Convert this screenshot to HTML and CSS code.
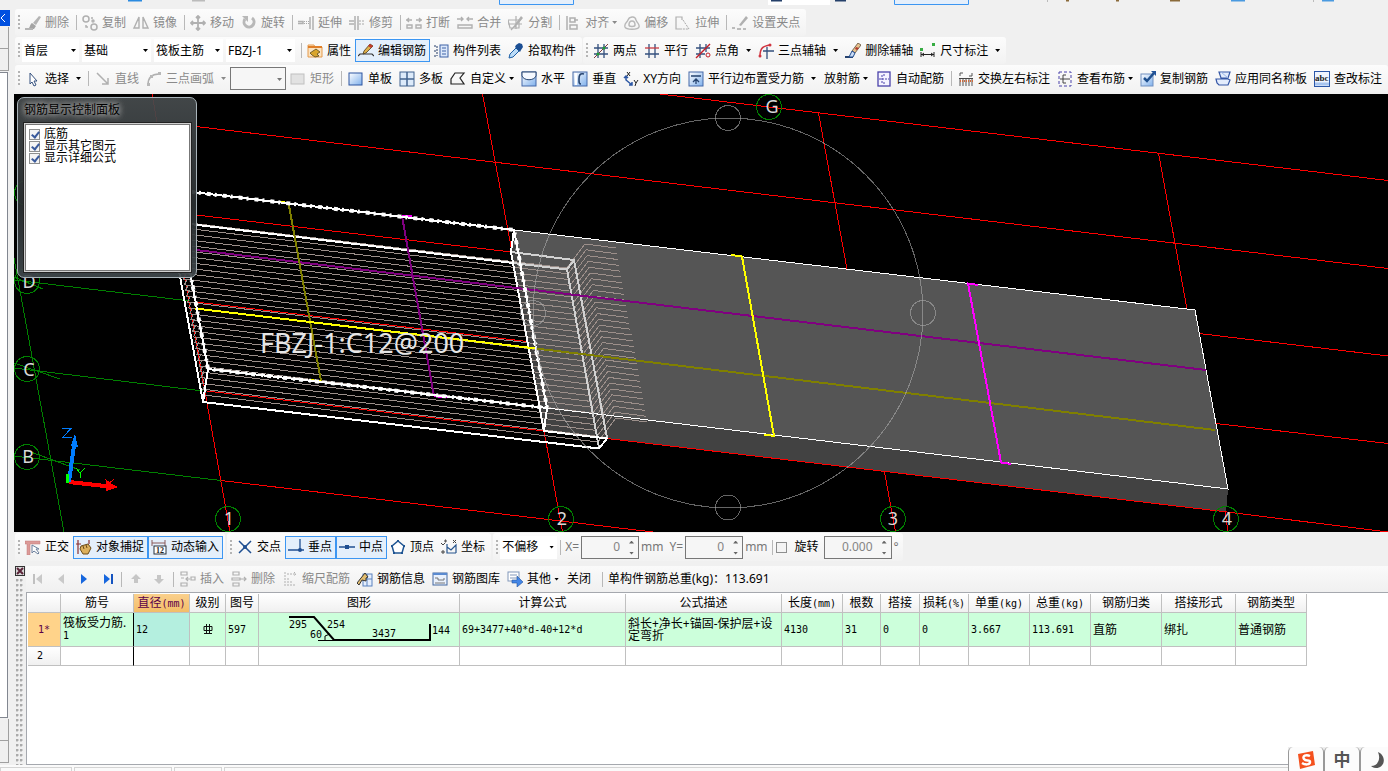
FILE: index.html
```html
<!DOCTYPE html>
<html lang="zh-CN">
<head>
<meta charset="utf-8">
<title>钢筋编辑</title>
<link rel="stylesheet" href="styles.css">
</head>
<body>
<svg class="defs" aria-hidden="true">
  <defs>
    <linearGradient id="blueFill" x1="0" y1="0" x2="1" y2="1"><stop offset="0" stop-color="#fff"/><stop offset="1" stop-color="#7fb0ec"/></linearGradient>
    <symbol id="brush" viewBox="0 0 16 16"><path d="M14 1l2 1-5 8-3-2z" fill="#b4b4b4"/><path d="M7 8l4 3-2 3H3c2-1 2-5 4-6z" fill="#a4a4a4"/><path d="M0 14h8" stroke="#b4b4b4" stroke-width="2"/></symbol>
    <symbol id="copy" viewBox="0 0 16 16"><g fill="none" stroke="#b0b0b0" stroke-width="1.5"><circle cx="4" cy="4" r="3"/><circle cx="12" cy="12" r="3"/><path d="M9 3h2M4 10v2h2"/><circle cx="11" cy="6" r="1"/></g></symbol>
    <symbol id="mirror" viewBox="0 0 16 16"><path d="M6 2v11H1zM10 2v11h5z" fill="none" stroke="#b0b0b0" stroke-width="1.4"/></symbol>
    <symbol id="move" viewBox="0 0 16 16"><path d="M8 1v14M1 8h14M6 3l2-2 2 2M6 13l2 2 2-2M3 6L1 8l2 2M13 6l2 2-2 2" fill="none" stroke="#b0b0b0" stroke-width="1.8"/></symbol>
    <symbol id="rotate" viewBox="0 0 16 16"><path d="M4 4a5 5 0 1 0 7-1" fill="none" stroke="#b8b8b8" stroke-width="3"/><path d="M1 1h6v6z" fill="#b8b8b8"/></symbol>
    <symbol id="extend" viewBox="0 0 16 16"><path d="M0 6.500h5v2H0M12 2v12M15 1v14" fill="none" stroke="#b0b0b0" stroke-width="1.5"/><path d="M6 6.500h5M6 8.500h5" stroke="#a8a8a8" stroke-dasharray="1 1"/></symbol>
    <symbol id="trim" viewBox="0 0 16 16"><path d="M0 6h5M0 9h5M6 1v14M9 1v14" fill="none" stroke="#b0b0b0" stroke-width="1.5"/><path d="M10 6h6M10 9h6" stroke="#a8a8a8" stroke-dasharray="2 1"/></symbol>
    <symbol id="break" viewBox="0 0 16 16"><path d="M0 5h6M10 5h6M3 3L1 5l2 2M13 3l2 2-2 2M1 10h5v3H1zM10 10h5v3h-5z" fill="none" stroke="#b0b0b0" stroke-width="1.4"/></symbol>
    <symbol id="merge" viewBox="0 0 16 16"><path d="M0 4h6M10 4h6M4 2l2 2-2 2M12 2l-2 2 2 2M1 10h14v3H1z" fill="none" stroke="#b0b0b0" stroke-width="1.4"/></symbol>
    <symbol id="split" viewBox="0 0 16 16"><path d="M0 5h11v8H2zM3 15L13 4M8 1v13M0 9h14" fill="none" stroke="#b0b0b0" stroke-width="1.2"/><path d="M13 1l2 2-6 7-2 1 1-3z" fill="#b0b0b0"/></symbol>
    <symbol id="align" viewBox="0 0 16 16"><path d="M2 1v14M5 3h5v4H5zM5 10h7v4H5zM9 5h4" fill="none" stroke="#b0b0b0" stroke-width="1.5"/></symbol>
    <symbol id="offset" viewBox="0 0 16 16"><path d="M1 12c-1-4 2-4 3-7s7-5 8 0c1 3 4 4 3 7s-13 3-14 0z" fill="none" stroke="#b8b8b8" stroke-width="1.4"/><path d="M5 10c0-2 1-4 3-4s3 2 3 4-6 2-6 0z" fill="none" stroke="#b8b8b8" stroke-width="1.5"/></symbol>
    <symbol id="stretch" viewBox="0 0 16 16"><path d="M7 14H1V2h6v3" fill="none" stroke="#b0b0b0" stroke-width="1.2"/><path d="M8 5l6 9H7" fill="none" stroke="#a8a8a8" stroke-dasharray="2 1"/></symbol>
    <symbol id="grippt" viewBox="0 0 16 16"><path d="M14 1l2 2-7 8-2-1z" fill="#b0b0b0"/><path d="M0 13h3M5 14h4M11 14h3" stroke="#a8a8a8" stroke-width="1.500"/></symbol>
    <symbol id="props" viewBox="0 0 16 16"><path d="M1 2h6l1 2h7v10H1z" fill="#fbe3c0" stroke="#e59a4c"/><path d="M1 4h14" stroke="#e07f28" stroke-width="2"/><path d="M3 10l6-4 4 3-3 2 2 2-4 1-3-2z" fill="#d9a52c" stroke="#5b4a1c" stroke-width=".8"/></symbol>
    <symbol id="editbar" viewBox="0 0 16 16"><path d="M0 13l2-2h12l2 2" fill="none" stroke="#333" stroke-width="1.2"/><path d="M12 1l3 2-7 7-3 1 1-3z" fill="#e0b04a" stroke="#4a3b20" stroke-width=".8"/><path d="M12 1l3 2-2 2-3-2z" fill="#c23a2c"/></symbol>
    <symbol id="list" viewBox="0 0 16 16"><path d="M1 3h3M1 8h3M1 13h3M4 3v10" fill="none" stroke="#223a66" stroke-dasharray="2 1"/><rect x="7" y="2" width="8" height="12" fill="#dce8fa" stroke="#3f62a6"/><path d="M9 5h4M9 8h4M9 11h4" stroke="#3f62a6"/></symbol>
    <symbol id="dropper" viewBox="0 0 16 16"><path d="M1 15l1-4 6-6 3 3-6 6z" fill="#bcdcf8" stroke="#1d5fa6"/><path d="M7 4l5 5 1-2 2-3-1-3-3-1-3 2z" fill="#1c4f94"/></symbol>
    <symbol id="twopt" viewBox="0 0 16 16"><path d="M1 5h14M1 11h14M5 1v14M11 1v14" stroke="#34507e" stroke-width="1.3"/><path d="M1 15L15 1" stroke="#803838"/><circle cx="5" cy="11" r="1.500" fill="#1f9a33"/><circle cx="11" cy="5" r="1.500" fill="#1f9a33"/></symbol>
    <symbol id="parallel" viewBox="0 0 16 16"><path d="M5 1v14M11 1v14M1 11h14" stroke="#34507e" stroke-width="1.3"/><path d="M1 5h14" stroke="#c83a42" stroke-width="1.3"/></symbol>
    <symbol id="ptangle" viewBox="0 0 16 16"><path d="M1 5h14M1 11h9M5 1v14M11 1v8" stroke="#34507e" stroke-width="1.300"/><path d="M1 15L15 1" stroke="#c31e28" stroke-width="1.500"/><circle cx="13" cy="12" r="2" fill="none" stroke="#c31e28"/></symbol>
    <symbol id="arcaxis" viewBox="0 0 16 16"><path d="M2 13c0-8 3-10 10-11" fill="none" stroke="#d03540" stroke-width="1.500"/><path d="M5 8h11M9 4v12" stroke="#34507e" stroke-width="1.300"/><circle cx="2" cy="13" r="1.500" fill="#d03540"/><circle cx="12" cy="2" r="1.500" fill="#d03540"/></symbol>
    <symbol id="delaxis" viewBox="0 0 16 16"><path d="M0 14h8" stroke="#27436f" stroke-width="2"/><path d="M13 0l3 2-6 8-3-2z" fill="#e8c28e" stroke="#5a4b36" stroke-width=".8"/><path d="M7 8l3 2-2 4H4z" fill="#c9dcf6" stroke="#1f4a8c"/><path d="M11 4l3 1-2 2-2-1z" fill="#b23b2d"/></symbol>
    <symbol id="dimension" viewBox="0 0 16 16"><path d="M1 9v5M14 9v5M1 11.500h13M4 10l-2 1.500L4 13M11 10l2 1.500L11 13" fill="none" stroke="#222"/><path d="M0 5h3v3H0zM12 0h3v3h-3z" fill="#37ad43"/></symbol>
    <symbol id="cursor" viewBox="0 0 16 16"><path d="M5 2v11l2-2 2 4 2-1-2-4h3z" fill="#fff" stroke="#34507e"/></symbol>
    <symbol id="line" viewBox="0 0 16 16"><path d="M2 2l11 11M13 7v6H7" fill="none" stroke="#b0b0b0" stroke-width="1.500"/></symbol>
    <symbol id="arc" viewBox="0 0 16 16"><path d="M2 14C2 6 6 3 13 3" fill="none" stroke="#b0b0b0" stroke-width="1.500"/><path d="M1 12h3v3H1zM4 4h3v3H4zM12 1h3v3h-3z" fill="#b8b8b8"/></symbol>
    <symbol id="rect" viewBox="0 0 16 16"><rect x="1" y="3" width="13" height="10" fill="#e2e2e2" stroke="#c0c0c0"/></symbol>
    <symbol id="single" viewBox="0 0 16 16"><rect x="1" y="2" width="13" height="12" fill="url(#blueFill)" stroke="#2c55a0"/></symbol>
    <symbol id="multi" viewBox="0 0 16 16"><rect x="1" y="1" width="14" height="14" fill="#dceafa" stroke="#41638f"/><path d="M8 1v14M1 8h14" stroke="#41638f" stroke-width="1.500"/></symbol>
    <symbol id="custom" viewBox="0 0 16 16"><path d="M5 2h9l-4 5 4 6H1V8z" fill="none" stroke="#222" stroke-width="1.200"/></symbol>
    <symbol id="horiz" viewBox="0 0 16 16"><rect x="1" y="1" width="14" height="14" fill="url(#blueFill)" stroke="#4569a8"/><path d="M1 5c2 5 12 5 14 0V1H1z" fill="#f4f8ff" stroke="#25436f"/></symbol>
    <symbol id="vert" viewBox="0 0 16 16"><rect x="1" y="1" width="14" height="14" fill="url(#blueFill)" stroke="#4569a8"/><path d="M12 3C8 2 7 4 7 8s0 5 2 5" fill="none" stroke="#25436f" stroke-width="1.600"/><path d="M4 2v12" stroke="#fff" stroke-width="2"/></symbol>
    <symbol id="xydir" viewBox="0 0 16 16"><path d="M4 1l3 4M7 1L4 5M11 9l2 3 2-3M13 12l-1 3" stroke="#222" fill="none"/><path d="M3 5v4l6 5M1 7l2-2 2 2M9 11v3H6" fill="none" stroke="#2c57a4" stroke-width="1.500"/></symbol>
    <symbol id="edgebar" viewBox="0 0 16 16"><rect x="1" y="1" width="14" height="14" fill="url(#blueFill)" stroke="#4569a8"/><path d="M3 5h10M8 13V8M5 11l3-3 3 3" fill="none" stroke="#25436f" stroke-width="1.300"/></symbol>
    <symbol id="auto" viewBox="0 0 16 16"><rect x="2" y="1" width="12" height="14" fill="#f5f3ff" stroke="#4a42aa" stroke-width="1.300"/><path d="M9 4H6v8h3M3 8h10" fill="none" stroke="#4a42aa" stroke-dasharray="2 1"/></symbol>
    <symbol id="swap" viewBox="0 0 16 16"><path d="M2 5V2h3M14 2v3h-3" fill="none" stroke="#555"/><path d="M1 7.500h14" stroke="#444"/><path d="M2 8v7M5 8v7M8 8v7M11 8v7M14 8v7" stroke="#555"/><path d="M2 10h13" stroke="#d36a3a" stroke-width="2" stroke-dasharray="1 1"/></symbol>
    <symbol id="viewbar" viewBox="0 0 16 16"><rect x="2" y="1" width="12" height="14" fill="none" stroke="#4a42aa" stroke-dasharray="3 2"/><path d="M9 4H6v8h3M3 8h10" fill="none" stroke="#444"/></symbol>
    <symbol id="copybar" viewBox="0 0 16 16"><rect x="1" y="3" width="12" height="12" fill="url(#blueFill)" stroke="#7090c0"/><path d="M4 7l3 3 7-8" fill="none" stroke="#1e4f8e" stroke-width="2.500"/><path d="M11 0h5v5z" fill="#23549a"/></symbol>
    <symbol id="apply" viewBox="0 0 16 16"><path d="M4 1h11l-2 6H6zM1 8h12l2 1-2 5H4l-2-2z" fill="#e3ecfc" stroke="#3557a6" stroke-width="1.200"/><path d="M6 1l7 6" stroke="#9bb7e8"/></symbol>
    <symbol id="abc" viewBox="0 0 16 16"><rect x="0.500" y="0.500" width="15" height="15" fill="#eef4fe" stroke="#2a56a8"/><path d="M1 13h14" stroke="#a6c4ef" stroke-width="3"/><text x="1" y="10" font-family="Liberation Serif" font-size="9" font-weight="bold" fill="#222">abc</text></symbol>
    <symbol id="ortho" viewBox="0 0 16 16"><path d="M0 2h15v3H5v11H2V5H0z" fill="#dc9a98" stroke="#c27b79" stroke-width=".5"/><path d="M7 6v8l2-2 4 3 1-1-3-4h3z" fill="#fff" stroke="#6a7f9c"/></symbol>
    <symbol id="snap" viewBox="0 0 16 16"><path d="M2 1v14M13 1v4M0 5h5" stroke="#8a3030" stroke-width="1.200"/><path d="M5 7l7-2 3 4-3 6H7l-3-5z" fill="#dcb05c" stroke="#6b4c1a"/><path d="M7 7l1 3M10 6l1 3" stroke="#6b4c1a"/></symbol>
    <symbol id="dyn" viewBox="0 0 16 16"><path d="M1 1v6M14 1v6M1 4h13" stroke="#8a5a5a"/><rect x="3" y="7" width="12" height="8" fill="#fff" stroke="#27303c"/><text x="5" y="14" font-family="Liberation Serif" font-size="8" font-weight="bold" fill="#222">12</text></symbol>
    <symbol id="cross" viewBox="0 0 16 16"><path d="M2 2l12 12M14 2L2 14" stroke="#1f4f92" stroke-width="1.500"/><circle cx="8" cy="8" r="2" fill="#1f4f92"/></symbol>
    <symbol id="perp" viewBox="0 0 16 16"><path d="M0 11h16M12 0v11" stroke="#1f4f92" stroke-width="1.300"/><circle cx="12" cy="11" r="2" fill="#1f4f92"/></symbol>
    <symbol id="mid" viewBox="0 0 16 16"><path d="M0 8h16" stroke="#1f4f92" stroke-width="1.500"/><rect x="6" y="6" width="4" height="4" fill="#1f4f92"/></symbol>
    <symbol id="vertex" viewBox="0 0 16 16"><path d="M8 2l6 5-2 7H4L2 7z" fill="#fff" stroke="#1f5593" stroke-width="1.500"/><path d="M7 1h2v2H7zM1 6h2v2H1zM13 6h2v2h-2zM3 13h2v2H3zM11 13h2v2h-2z" fill="#1f5593"/></symbol>
    <symbol id="coord" viewBox="0 0 16 16"><path d="M0 4l2 2 2-2M1 12h2v2H1zM12 1l3 3M15 1l-3 3M4 1h1v2H4z" fill="none" stroke="#444"/><path d="M6 5v9h9M6 8l4 3 5-5v8" fill="none" stroke="#27558e" stroke-width="1.200"/></symbol>
    <symbol id="first" viewBox="0 0 16 16"><path d="M4 3v10" stroke="#c0c0c0" stroke-width="2"/><path d="M12 3v10L6 8z" fill="#c9c9c9"/></symbol>
    <symbol id="prev" viewBox="0 0 16 16"><path d="M11 3v10L5 8z" fill="#c9c9c9"/></symbol>
    <symbol id="next" viewBox="0 0 16 16"><path d="M5 3v10l6-5z" fill="#1767de"/></symbol>
    <symbol id="last" viewBox="0 0 16 16"><path d="M5 3v10l6-5z" fill="#1767de"/><path d="M13 3v10" stroke="#1554c0" stroke-width="2"/></symbol>
    <symbol id="up" viewBox="0 0 16 16"><path d="M8 3l5 5h-3v4H6V8H3z" fill="#c6c6c6"/></symbol>
    <symbol id="down" viewBox="0 0 16 16"><path d="M8 13l5-5h-3V4H6v4H3z" fill="#c6c6c6"/></symbol>
    <symbol id="insert" viewBox="0 0 16 16"><path d="M1 1h6v3H1zM1 12h6v3H1zM1 7h3M6 8h4M8 6L6 8l2 2M11 6h4v3h-4z" fill="none" stroke="#b0b0b0" stroke-width="1.200"/></symbol>
    <symbol id="remove" viewBox="0 0 16 16"><path d="M2 1h6v3H2zM2 12h6v3H2zM1 7h8v2H1zM9 8h6M13 6l2 2-2 2" fill="none" stroke="#b0b0b0" stroke-width="1.200"/></symbol>
    <symbol id="scale" viewBox="0 0 16 16"><path d="M3 1v14M5 3h8M12 1l2 2-2 2M6 15V7M9 15v-5M12 15v-3" fill="none" stroke="#b0b0b0" stroke-dasharray="2 1"/></symbol>
    <symbol id="info" viewBox="0 0 16 16"><rect x="6" y="3" width="9" height="12" fill="#e6effd" stroke="#5b82bf"/><path d="M6 8h9M10 3v12" stroke="#5b82bf"/><path d="M0 12l8-10 3 4-2 1v3L5 9l-3 5z" fill="#e2bd70" stroke="#333"/></symbol>
    <symbol id="gallery" viewBox="0 0 16 16"><rect x="1" y="2" width="14" height="12" fill="#e9f1fd" stroke="#44699f"/><path d="M1 3h14" stroke="#5a8ad0" stroke-width="2"/><path d="M3 7h3v2h6V7M3 12h10" fill="none" stroke="#777"/></symbol>
    <symbol id="other" viewBox="0 0 16 16"><rect x="1" y="1" width="11" height="9" fill="#fff" stroke="#8197ba"/><path d="M3 4h7M3 7h7" stroke="#8197ba"/><path d="M5 9h5V5l6 6-6 5v-4H5z" fill="#4486e6" stroke="#24549e" stroke-width=".6"/></symbol>
  </defs>
</svg>

<svg class="top-strip" viewBox="0 0 1388 9" preserveAspectRatio="xMinYMin slice" aria-hidden="true">
  <path d="M128 0h14" stroke="#2a8ae0" stroke-width="3"/><path d="M192 0h13" stroke="#bbb" stroke-width="3"/>
  <path d="M499.500-2v6.500h74V-2" fill="#e5effb" stroke="#3c96f2"/><path d="M768-1h62v6h-62z" fill="#fff"/><path d="M771 0h11M835 0h11" stroke="#25406a" stroke-width="3"/>
  <path d="M894.500-2v6.500h74V-2" fill="#e5effb" stroke="#3c96f2"/><path d="M1047.500 0v2M1313.500 0v2" stroke="#bbb"/><path d="M1066 0h3M1116 0h3M1170 0h10" stroke="#8a6a3a" stroke-width="3"/><path d="M1231 0h14M1322 0h12" stroke="#4a9ae0" stroke-width="3"/>
</svg>

<div class="app">
  <aside class="dock">
    <button class="dock-collapse" aria-label="收起"><svg viewBox="0 0 10 16" width="10" height="16"><path d="M5 4L1 8l4 4" fill="none" stroke="#fff"/></svg></button>
    <div class="dock-tab"></div><div class="dock-tab"></div>
    <div class="dock-body"></div>
    <div class="dock-tab"></div><div class="dock-tab"></div>
  </aside>

  <main class="work">
    <div class="bars">
      <div class="bar-row">
        <div class="bar">
          <i class="grip"></i>
          <button class="tool" disabled><svg class="ico"><use href="#brush"/></svg>删除</button><i class="sep"></i>
          <button class="tool" disabled><svg class="ico"><use href="#copy"/></svg>复制</button>
          <button class="tool" disabled><svg class="ico"><use href="#mirror"/></svg>镜像</button><i class="sep"></i>
          <button class="tool" disabled><svg class="ico"><use href="#move"/></svg>移动</button>
          <button class="tool" disabled><svg class="ico"><use href="#rotate"/></svg>旋转</button><i class="sep"></i>
          <button class="tool" disabled><svg class="ico"><use href="#extend"/></svg>延伸</button>
          <button class="tool" disabled><svg class="ico"><use href="#trim"/></svg>修剪</button><i class="sep"></i>
          <button class="tool" disabled><svg class="ico"><use href="#break"/></svg>打断</button>
          <button class="tool" disabled><svg class="ico"><use href="#merge"/></svg>合并</button>
          <button class="tool" disabled><svg class="ico"><use href="#split"/></svg>分割</button><i class="sep"></i>
          <button class="tool" disabled><svg class="ico"><use href="#align"/></svg>对齐<i class="caret near"></i></button>
          <button class="tool" disabled><svg class="ico"><use href="#offset"/></svg>偏移</button>
          <button class="tool" disabled><svg class="ico"><use href="#stretch"/></svg>拉伸</button><i class="sep"></i>
          <button class="tool" disabled><svg class="ico"><use href="#grippt"/></svg>设置夹点</button>
        </div>
      </div>
      <div class="bar-row">
        <div class="bar">
          <i class="grip"></i>
          <div class="pickers">
            <span class="pick short"><select aria-label="楼层"><option>首层</option></select></span>
            <span class="pick"><select aria-label="构件类型"><option>基础</option></select></span>
            <span class="pick"><select aria-label="构件"><option>筏板主筋</option></select></span>
            <span class="pick"><select aria-label="名称"><option>FBZJ-1</option></select></span>
          </div>
          <i class="sep"></i>
          <button class="tool"><svg class="ico"><use href="#props"/></svg>属性</button>
          <button class="tool on"><svg class="ico"><use href="#editbar"/></svg>编辑钢筋</button>
          <button class="tool"><svg class="ico"><use href="#list"/></svg>构件列表</button>
          <button class="tool"><svg class="ico"><use href="#dropper"/></svg>拾取构件</button>
        </div>
        <div class="bar">
          <i class="grip"></i>
          <button class="tool"><svg class="ico"><use href="#twopt"/></svg>两点</button>
          <button class="tool"><svg class="ico"><use href="#parallel"/></svg>平行</button>
          <button class="tool"><svg class="ico"><use href="#ptangle"/></svg>点角<i class="caret"></i></button>
          <button class="tool"><svg class="ico"><use href="#arcaxis"/></svg>三点辅轴<i class="caret"></i></button>
          <button class="tool"><svg class="ico"><use href="#delaxis"/></svg>删除辅轴</button>
          <button class="tool"><svg class="ico"><use href="#dimension"/></svg>尺寸标注<i class="caret"></i></button>
        </div>
      </div>
      <div class="bar-row">
        <div class="bar wide">
          <i class="grip"></i>
          <button class="tool"><svg class="ico"><use href="#cursor"/></svg>选择<i class="caret"></i></button><i class="sep even"></i>
          <button class="tool" disabled><svg class="ico"><use href="#line"/></svg>直线</button>
          <button class="tool" disabled><svg class="ico"><use href="#arc"/></svg>三点画弧<i class="caret"></i></button>
          <span class="pick boxed"><select aria-label="画法" disabled><option></option></select></span>
          <button class="tool" disabled><svg class="ico"><use href="#rect"/></svg>矩形</button><i class="sep even"></i>
          <button class="tool"><svg class="ico"><use href="#single"/></svg>单板</button>
          <button class="tool"><svg class="ico"><use href="#multi"/></svg>多板</button>
          <button class="tool"><svg class="ico"><use href="#custom"/></svg>自定义<i class="caret near"></i></button>
          <button class="tool"><svg class="ico"><use href="#horiz"/></svg>水平</button>
          <button class="tool"><svg class="ico"><use href="#vert"/></svg>垂直</button>
          <button class="tool"><svg class="ico"><use href="#xydir"/></svg>XY方向</button>
          <button class="tool"><svg class="ico"><use href="#edgebar"/></svg>平行边布置受力筋<i class="caret"></i></button>
          <button class="tool plain">放射筋<i class="caret near"></i></button>
          <button class="tool"><svg class="ico"><use href="#auto"/></svg>自动配筋</button><i class="sep even"></i>
          <button class="tool"><svg class="ico"><use href="#swap"/></svg>交换左右标注</button>
          <button class="tool"><svg class="ico"><use href="#viewbar"/></svg>查看布筋<i class="caret near"></i></button>
          <button class="tool"><svg class="ico"><use href="#copybar"/></svg>复制钢筋</button>
          <button class="tool"><svg class="ico"><use href="#apply"/></svg>应用同名称板</button>
          <button class="tool"><svg class="ico"><use href="#abc"/></svg>查改标注</button>
        </div>
      </div>
    </div>

    <section class="stage">
      <svg class="scene" viewBox="14 94 1374 438" preserveAspectRatio="xMinYMin slice" shape-rendering="crispEdges">
        <rect x="14" y="94" width="1374" height="438" fill="#000"/>
        <path d="M514 230L1195 310 1228 489 547 408z" fill="#555"/>
        <path d="M547 408L1228 489 1226 512 544 431zM514 230L547 408 544 431 511 252z" fill="#424242"/>
        <g fill="none" stroke="#f00">
          <path d="M660 94L1388 180.500M196 126.500L740 191.500 1388 268.500M196 215L511 252M1199 333.500L1388 356M196 302L527 341.500M1216 423.500L1388 443.500M207 391L544 431M607 438.500L1227 512 1388 532M221 480.500L653 532"/>
          <path d="M152 94L230 532M482.500 94L512 252M544 431L562.500 532M818.500 113L847 269M884.500 472L895.500 532M1158.500 153L1187 309M1225 512L1228 532"/>
        </g>
        <g fill="none" stroke="#008000">
          <path d="M14 258L64 532M14 368L203 391M14 363L60 379M14 280L190 301M14 277L43 289M14 456L221 480.500M28 451L80 470"/>
          <circle cx="27" cy="193" r="12.500"/><circle cx="27" cy="281" r="12.500"/><circle cx="27" cy="369" r="12.500"/><circle cx="27" cy="457" r="12.500"/>
          <circle cx="228" cy="519" r="12.500"/><circle cx="561" cy="519" r="12.500"/><circle cx="893" cy="519" r="12.500"/><circle cx="1226" cy="519" r="12.500"/><circle cx="769" cy="107" r="12.500"/>
        </g>
        <g id="rebars" fill="none" stroke="#9c8f8a"></g>
        <g fill="none" stroke="#fff">
          <path d="M514 230L1195 310 1228 489 547 408"/>
          <path d="M511 252L574 260 607 438M513 263L567 269.500 599 448M574 260L567 269.500" stroke="#d2d2d2" stroke-width="2"/>
          <path d="M173 222L513 263M170 222L203 402 599 448.500 607 438.500 544 431 511 252 514 230M208 369L203 402M547 408L544 431" stroke-width="2"/>
        </g>
        <g fill="none" stroke-width="2">
          <path d="M196 250L740 314.500 1206 370M402 216L434 396" stroke="#800080"/>
          <path d="M536 348.500L1215 430M288.500 203L321 381" stroke="#808000"/>
          <path d="M195 308.500L536 348.500M731 255L742 256.500 774 436 764 434.500M278 201.500L289 203M311 380L321 381.500" stroke="#ff0"/>
          <path d="M978 285L968 283.500 1001 462.500 1011 464M402 216h10M434 396L447 397.500" stroke="#f0f"/>
        </g>
        <g fill="none" stroke="#fff">
          <path d="M175 190L514 230 547 408 208 369z" stroke-width="2"/>
          <path d="M175 190L514 230 547 408 208 369z" stroke-width="4" stroke-dasharray="4 4 2 6" shape-rendering="auto"/>
        </g>
        <g fill="none" stroke="#aaa" stroke-opacity=".6">
          <circle cx="728" cy="313" r="195"/>
          <circle cx="728" cy="118" r="12.500"/><circle cx="728" cy="507.500" r="12.500"/><circle cx="923" cy="313" r="12.500"/><circle cx="533" cy="313" r="12.500"/>
        </g>
        <g class="scene-label" fill="#d8d8d8" text-anchor="middle">
          <text x="29" y="288">D</text><text x="29" y="376">C</text><text x="28" y="463">B</text><text x="772" y="113">G</text>
          <text x="229" y="525">1</text><text x="562" y="525">2</text><text x="893" y="525">3</text><text x="1227" y="525">4</text>
        </g>
        <text class="scene-note" x="260" y="353" fill="#e6e6e6">FBZJ-1:C12@200</text>
        <path d="M69 482L114 487" stroke="#f00" stroke-width="4"/><path d="M106 481l12 6-12 4z" fill="#f00"/>
        <path d="M69 482L74 445" stroke="#007dff" stroke-width="4"/><path d="M71 446l4-12 3 13z" fill="#007dff"/><path d="M66 474h3v9h-3z" fill="#0f0"/>
        <path d="M62 428.500h9L62.500 437.500h9" fill="none" stroke="#007dff"/><path d="M76 468l4 5 5-5M80 473v5" fill="none" stroke="#0f0"/><path d="M105 479l9 8M114 479l-9 8" stroke="#f00"/>
      </svg>
      <div class="float">
        <h2>钢筋显示控制面板</h2>
        <div class="float-body">
          <label><input type="checkbox" checked>底筋</label>
          <label><input type="checkbox" checked>显示其它图元</label>
          <label><input type="checkbox" checked>显示详细公式</label>
        </div>
      </div>
    </section>

    <div class="bar-row snap-row">
      <div class="bar">
        <i class="grip"></i>
        <button class="tool"><svg class="ico"><use href="#ortho"/></svg>正交</button>
        <button class="tool on"><svg class="ico"><use href="#snap"/></svg>对象捕捉</button>
        <button class="tool on"><svg class="ico"><use href="#dyn"/></svg>动态输入</button>
      </div>
      <div class="bar">
        <i class="grip"></i>
        <button class="tool"><svg class="ico"><use href="#cross"/></svg>交点</button>
        <button class="tool on"><svg class="ico"><use href="#perp"/></svg>垂点</button>
        <button class="tool on"><svg class="ico"><use href="#mid"/></svg>中点</button>
        <button class="tool"><svg class="ico"><use href="#vertex"/></svg>顶点</button>
        <button class="tool"><svg class="ico"><use href="#coord"/></svg>坐标</button>
      </div>
      <div class="bar">
        <i class="grip"></i>
        <span class="pick short"><select aria-label="偏移方式"><option>不偏移</option></select></span>
        <i class="sep"></i>
        <label class="field" for="dx">X=</label><span class="spin"><input id="dx" type="text" value="0" disabled></span><span class="field unit">mm</span>
        <label class="field" for="dy">Y=</label><span class="spin"><input id="dy" type="text" value="0" disabled></span><span class="field unit">mm</span>
        <i class="sep flush"></i>
        <label class="turn"><input type="checkbox">旋转</label>
        <span class="spin angle"><input type="text" value="0.000" aria-label="旋转角度" disabled></span><span class="field">°</span>
      </div>
    </div>

    <section class="panel">
      <div class="panel-grip"><svg viewBox="0 0 10 10" width="10" height="10"><rect x=".5" y=".5" width="9" height="9" fill="#d8d8d8" stroke="#333"/><path d="M2 2l6 6M8 2L2 8" stroke="#5a2438" stroke-width="2"/></svg></div>
      <div class="panel-main">
        <div class="panel-bar">
          <button class="tool nav" disabled aria-label="首条"><svg class="ico"><use href="#first"/></svg></button>
          <button class="tool nav" disabled aria-label="上一条"><svg class="ico"><use href="#prev"/></svg></button>
          <button class="tool nav" aria-label="下一条"><svg class="ico"><use href="#next"/></svg></button>
          <button class="tool nav" aria-label="末条"><svg class="ico"><use href="#last"/></svg></button><i class="sep"></i>
          <button class="tool nav" disabled aria-label="上移"><svg class="ico"><use href="#up"/></svg></button>
          <button class="tool nav" disabled aria-label="下移"><svg class="ico"><use href="#down"/></svg></button><i class="sep even"></i>
          <button class="tool" disabled><svg class="ico"><use href="#insert"/></svg>插入</button>
          <button class="tool" disabled><svg class="ico"><use href="#remove"/></svg>删除</button>
          <button class="tool" disabled><svg class="ico"><use href="#scale"/></svg>缩尺配筋</button>
          <button class="tool"><svg class="ico"><use href="#info"/></svg>钢筋信息</button>
          <button class="tool"><svg class="ico"><use href="#gallery"/></svg>钢筋图库</button>
          <button class="tool"><svg class="ico"><use href="#other"/></svg>其他<i class="caret near"></i></button>
          <button class="tool plain">关闭</button><i class="sep loose"></i>
          <span class="total">单构件钢筋总重(kg)：113.691</span>
        </div>
        <div class="grid-wrap">
          <table class="grid">
            <colgroup><col class="w33"><col class="w73"><col class="w56"><col class="w36"><col class="w33"><col class="w201"><col class="w166"><col class="w156"><col class="w61"><col class="w38"><col class="w39"><col class="w49"><col class="w61"><col class="w61"><col class="w71"><col class="w74"><col class="w71"></colgroup>
            <thead><tr><th></th><th>筋号</th><th class="cur">直径<small>(mm)</small></th><th>级别</th><th>图号</th><th>图形</th><th>计算公式</th><th>公式描述</th><th>长度<small>(mm)</small></th><th>根数</th><th>搭接</th><th>损耗<small>(%)</small></th><th>单重<small>(kg)</small></th><th>总重<small>(kg)</small></th><th>钢筋归类</th><th>搭接形式</th><th>钢筋类型</th></tr></thead>
            <tbody>
              <tr class="active">
                <th class="num">1*</th><td class="name">筏板受力筋.<br><small>1</small></td><td class="num cell">12</td>
                <td class="mid"><svg width="10" height="10" viewBox="0 0 10 10"><path d="M1 2.500h8v4H1zM3.500 0v9M6.500 0v9M1 9.500h8" fill="none" stroke="#111"/></svg></td>
                <td class="num">597</td>
                <td class="shape"><svg viewBox="259 613 200 33" width="200" height="33"><path d="M289 617h25L334 640h96v-16" fill="none" stroke="#000" stroke-width="2"/><path d="M318 640.500h16M325 640v-4l5-2" fill="none" stroke="#000"/><text x="289" y="628">295</text><text x="327" y="628">254</text><text x="310" y="638">60</text><text x="372" y="637">3437</text><text x="432" y="634">144</text></svg></td>
                <td class="num">69+3477+40*d-40+12*d</td><td class="desc">斜长+净长+锚固-保护层+设定弯折</td><td class="num">4130</td><td class="num">31</td><td class="num">0</td><td class="num">0</td><td class="num">3.667</td><td class="num">113.691</td><td>直筋</td><td>绑扎</td><td>普通钢筋</td>
              </tr>
              <tr><th class="num">2</th><td class="name"></td><td></td><td></td><td></td><td></td><td></td><td></td><td></td><td></td><td></td><td></td><td></td><td></td><td></td><td></td><td></td></tr>
            </tbody>
          </table>
        </div>
      </div>
    </section>
  </main>
</div>

<footer class="status"><span class="s1"></span><span class="s2"></span><span class="s3"></span><span class="s4"></span></footer>

<div class="ime">
  <button aria-label="输入法"><svg width="20" height="20" viewBox="0 0 20 20"><path d="M2 4l15-3 2 14-15 4z" fill="#f4511e"/><path d="M14 6c-4-2-8 0-6 3s6 0 6 3-5 3-8 1" fill="none" stroke="#fff" stroke-width="2.500"/></svg></button>
  <button>中</button>
  <button aria-label="夜间"><svg width="16" height="18" viewBox="0 0 16 18"><path d="M8 1c9 4 7 16-2 16-3 0-5-2-5-2 7 0 10-7 7-14z" fill="#555"/></svg></button>
</div>
<script src="script.js"></script>
</body>
</html>
```

FILE: styles.css
```css
* { box-sizing: border-box; }
html, body { height: 100%; }
body {
  margin: 0;
  display: flex;
  flex-direction: column;
  overflow: hidden;
  background: #f0f0f0;
  color: #000;
  font: 12px/16px "Noto Sans", "Noto Sans CJK SC", sans-serif;
}
button, input, select { font: inherit; color: inherit; }
.defs { position: absolute; width: 0; height: 0; }
.top-strip { display: block; flex: none; width: 100%; height: 9px; }
.app { flex: 1; display: flex; min-height: 0; }

.dock { flex: none; width: 14px; display: flex; flex-direction: column; align-items: flex-start; padding-bottom: 2px; }
.dock-collapse { width: 10px; height: 16px; margin: 1px 0; padding: 0; border: 0; background: #0050e0; display: flex; }
.dock-tab { width: 9px; height: 22px; border: solid #a0a0a0; border-width: 0 1px 1px 0; }
.dock-body { flex: 1; width: 8px; margin: 1px 0; background: #fff; border: solid #828790; border-width: 1px 1px 1px 0; }

.work { flex: 1; min-width: 0; display: flex; flex-direction: column; }
.bars { display: flex; flex-direction: column; gap: 1px; padding-bottom: 2px; }
.bar-row { display: flex; gap: 1px; padding-left: 1px; }
.bar {
  display: flex;
  align-items: center;
  height: 27px;
  padding: 0 2px 0 3px;
  border-radius: 3px;
  background: linear-gradient(#fcfcfc, #f2f2f2);
}
.bar.wide { flex: 1; }
.grip { flex: none; width: 2px; height: 15px; margin-right: 2px; background: repeating-linear-gradient(#b4b4b4 0 2px, transparent 2px 4px); }
.sep { flex: none; width: 1px; height: 15px; margin: 0 2px 0 3px; background: #b8b8b8; }
.sep.even { margin: 0 3px; }
.sep.flush { margin: 0 2px 0 0; }
.sep.loose { margin: 0 5px 0 6px; }
.tool {
  flex: none;
  display: flex;
  align-items: center;
  gap: 4px;
  height: 23px;
  padding: 0 3px 0 2px;
  border: 1px solid transparent;
  background: none;
  white-space: nowrap;
}
.tool:disabled { color: #8a8a8a; }
.tool.on { background: #e4effb; border-color: #3c96f2; }
.tool.nav { width: 23px; padding: 0; justify-content: center; }
.tool.plain { padding: 0 4px 0 3px; }
.ico { flex: none; width: 16px; height: 16px; }
.caret { width: 5px; height: 3px; margin-left: 3px; background: currentColor; clip-path: polygon(0 0, 100% 0, 50% 100%); }
.caret.near { margin-left: -1px; }

.pickers { display: flex; gap: 3px; margin: 0 3px 0 0; }
.pick { position: relative; display: flex; width: 69px; height: 23px; background: #fff; }
.pick.short { width: 57px; }
.pick select { width: 100%; padding: 0 2px; border: 0; background: none; appearance: none; }
.pick::after { content: ""; position: absolute; right: 3px; top: 10px; width: 5px; height: 3px; background: #000; clip-path: polygon(0 0, 100% 0, 50% 100%); }
.pick.boxed { width: 56px; margin-right: 1px; background: #f6f6f6; border: 1px solid #777; }
.pick.boxed::after { background: #777; }

.stage { position: relative; flex: 438 1 0; min-height: 0; background: #000; }
.scene { display: block; width: 100%; height: 100%; }
.scene-label { font: 18px "Noto Sans", sans-serif; }
.scene-note { font: 27px "Noto Sans", sans-serif; }
.float {
  position: absolute;
  left: 3px;
  top: 3px;
  width: 180px;
  padding: 0 5px 5px 6px;
  border: 1px solid #a9b4ba;
  border-radius: 7px;
  background: linear-gradient(#464b4dee, #2b3032ee 60%, #40484cee);
}
.float h2 { margin: 0; padding: 4px 0 5px; font-size: 12px; line-height: 16px; font-weight: normal; color: #000; text-shadow: 0 0 6px #aaa, 0 0 6px #aaa, 0 0 9px #888; }
.float-body { height: 149px; padding: 4px; background: #fff; border: 1px solid #d0d0d0; outline: 1px solid #222; box-shadow: inset 0 0 0 1px #777; }
.float-body label { display: flex; align-items: center; gap: 4px; height: 12px; line-height: 12px; }
input[type="checkbox"] { appearance: none; flex: none; position: relative; width: 11px; height: 11px; margin: 0; border: 1px solid #8e8f8f; background: #f4f4f4; }
input[type="checkbox"]:checked::after { content: ""; position: absolute; left: 3px; top: 0; width: 3px; height: 6px; border: solid #3a5a9c; border-width: 0 2px 2px 0; transform: rotate(38deg); }

.snap-row { gap: 2px; padding-top: 1px; padding-bottom: 5px; }
.snap-row .bar { height: 28px; }
.field { color: #777; padding: 0 2px; }
.unit { padding-right: 4px; }
.spin { position: relative; display: flex; width: 58px; height: 23px; }
.spin.angle { width: 68px; margin-left: 5px; }
.spin input { width: 100%; padding: 0 18px 0 2px; text-align: right; background: #f6f6f6; border: 1px solid #777; color: #858585; }
.spin::before, .spin::after { content: ""; position: absolute; right: 5px; width: 5px; height: 3px; background: #666; }
.spin::before { top: 5px; clip-path: polygon(50% 0, 100% 100%, 0 100%); }
.spin::after { bottom: 4px; clip-path: polygon(0 0, 100% 0, 50% 100%); }
.turn { display: flex; align-items: center; gap: 8px; padding-left: 1px; }

.panel { flex: 199 1 0; min-height: 0; display: flex; }
.panel-grip { flex: none; width: 12px; padding-left: 1px; display: flex; flex-direction: column; }
.panel-grip::after { content: ""; flex: 1; margin: 3px 2px 0 1px; background: radial-gradient(circle at 1px 1px, #aaa 1px, transparent 2px) 0 0 / 4px 5px; }
.panel-main { flex: 1; min-width: 0; display: flex; flex-direction: column; }
.panel-bar { display: flex; align-items: center; height: 26px; background: linear-gradient(#fafafa, #f0f0f0); }
.grid-wrap { flex: 1; min-height: 0; overflow: hidden; padding: 1px 0 0 1px; background: #fff; border: solid #a5a8ae; border-width: 1px 0 1px 1px; }
.grid { table-layout: fixed; width: 1279px; border-collapse: separate; border-spacing: 0; line-height: 12px; }
.grid th, .grid td { height: 19px; padding: 0 2px; border: solid #c0c0c0; border-width: 0 1px 1px 0; font-weight: normal; text-align: left; vertical-align: middle; }
.grid thead th, .grid tbody th { text-align: center; background: linear-gradient(#fff, #f0f0f0); padding: 0; white-space: nowrap; }
.grid tbody th { padding-right: 8px; }
.grid .active th { padding-right: 0; }
.grid thead th.cur { background: linear-gradient(#fad08c, #f3bd68); color: #5a0048; }
.grid small, .grid .num { font-family: "DejaVu Sans Mono", monospace; font-size: 10px; }
.grid .active > * { height: 34px; background: #ccffdb; }
.grid .active th { background: #ffd38a; color: #5a0048; }
.grid .active .cell { background: #b4efdf; }
.grid .name { border-right-color: #000; }
.grid .mid { text-align: center; }
.grid .shape { padding: 0; }
.grid .shape svg { display: block; font: 10px "DejaVu Sans Mono", monospace; }
.w33 { width: 33px; } .w36 { width: 36px; } .w38 { width: 38px; } .w39 { width: 39px; } .w49 { width: 49px; }
.w56 { width: 56px; } .w61 { width: 61px; } .w71 { width: 71px; } .w73 { width: 73px; } .w74 { width: 74px; }
.w156 { width: 156px; } .w166 { width: 166px; } .w201 { width: 201px; }

.status { flex: none; display: flex; gap: 2px; height: 6px; padding-top: 2px; background: #fafafa; }
.status span { height: 8px; border: 1px solid #d4d4d4; }
.s1 { width: 72px; } .s2 { width: 98px; } .s3 { width: 48px; } .s4 { flex: 1; }

.ime { position: absolute; right: 0; bottom: 0; display: flex; width: 100px; height: 24px; overflow: hidden; background: #eee; }
.ime button { flex: none; width: 36px; height: 28px; padding: 0 0 2px; display: flex; align-items: center; justify-content: center; border: solid #999; border-width: 0 1px; border-radius: 5px 5px 0 0; background: #fcfcfc; color: #555; font-size: 17px; font-weight: bold; }
```

FILE: script.js
```js
// Bottom reinforcement: 31 bars, each with a hooked end on the right.
const group = document.getElementById("rebars");
const COUNT = 31;
for (let i = 0; i < COUNT; i++) {
  const x = i * 31 / 30;
  const y = i * 174 / 30;
  const bar = document.createElementNS("http://www.w3.org/2000/svg", "path");
  bar.setAttribute("d", `M${176 + x} ${215 + y}L${173 + x} ${221 + y}L${567 + x} ${268 + y}L${585 + x} ${244 + y}L${616 + x} ${248 + y}`);
  group.append(bar);
}
```
